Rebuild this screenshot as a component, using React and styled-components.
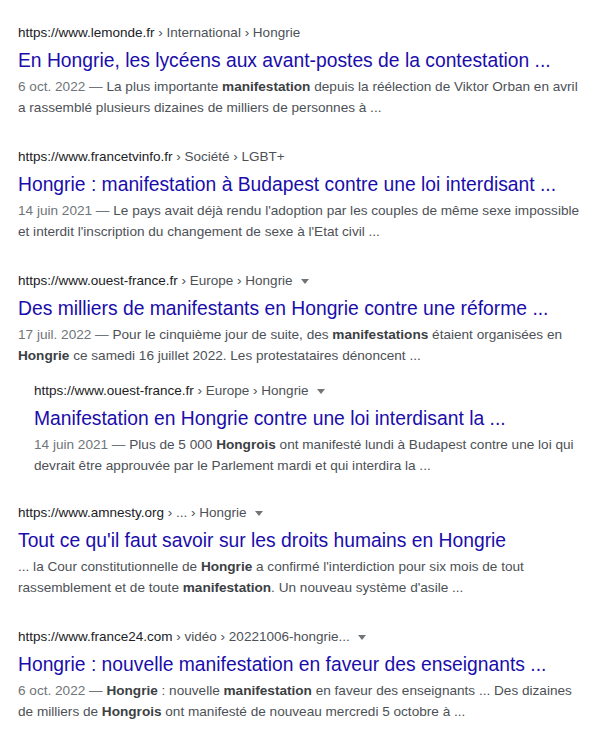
import React from "react";
import styled, { createGlobalStyle } from "styled-components";

const Global = createGlobalStyle`
  html, body { margin: 0; padding: 0; background: #fff; }
  body { font-family: "Liberation Sans", Arial, sans-serif; }
`;

const Page = styled.div`
  padding: 22px 21px 0 18px;
`;

const Result = styled.div`
  margin-left: ${(p) => (p.$nested ? "16px" : "0")};
  margin-top: ${(p) => (p.$nested ? "14px" : "0")};
  margin-bottom: ${(p) => (p.$nested ? "0" : p.$tight ? "26px" : "28px")};
`;

const UrlLine = styled.div`
  display: flex;
  align-items: center;
  font-size: 13.5px;
  line-height: 22px;
  color: #202124;
  white-space: nowrap;
`;

const Crumbs = styled.span`
  color: #4d5156;
`;

const Caret = styled.span`
  display: inline-block;
  width: 0;
  height: 0;
  margin-left: 8px;
  border-left: 4px solid transparent;
  border-right: 4px solid transparent;
  border-top: 5px solid #70757a;
`;

const Title = styled.a`
  display: block;
  font-size: 19.3px;
  line-height: 30px;
  padding-top: 2px;
  margin-bottom: -2px;
  color: #1a0dab;
  text-decoration: none;
  white-space: nowrap;
`;

const Snippet = styled.div`
  margin-top: 2px;
  font-size: 13.6px;
  line-height: 21px;
  color: #4d5156;
`;

const DateText = styled.span`
  color: #70757a;
`;

const B = styled.b`
  font-weight: 700;
  color: #3c4043;
`;

function Item({ url, crumbs, caret, title, date, children, nested, tight, extra }) {
  return (
    <Result $nested={nested} $tight={tight}>
      <UrlLine>
        {url}
        <Crumbs>&nbsp;{crumbs}</Crumbs>
        {caret && <Caret />}
      </UrlLine>
      <Title href="#">{title}</Title>
      <Snippet>
        {date && <DateText>{date} — </DateText>}
        {children}
      </Snippet>
      {extra}
    </Result>
  );
}

export default function App() {
  return (
    <>
      <Global />
      <Page>
        <Item
          url="https://www.lemonde.fr"
          crumbs="› International › Hongrie"
          title="En Hongrie, les lycéens aux avant-postes de la contestation ..."
          date="6 oct. 2022"
        >
          La plus importante <B>manifestation</B> depuis la réélection de Viktor Orban en avril a rassemblé plusieurs dizaines de milliers de personnes à ...
        </Item>
        <Item
          url="https://www.francetvinfo.fr"
          crumbs="› Société › LGBT+"
          title="Hongrie : manifestation à Budapest contre une loi interdisant ..."
          date="14 juin 2021"
        >
          Le pays avait déjà rendu l'adoption par les couples de même sexe impossible et interdit l'inscription du changement de sexe à l'Etat civil ...
        </Item>
        <Item
          url="https://www.ouest-france.fr"
          crumbs="› Europe › Hongrie"
          caret
          tight
          title="Des milliers de manifestants en Hongrie contre une réforme ..."
          date="17 juil. 2022"
          extra={
            <Item
              nested
              url="https://www.ouest-france.fr"
              crumbs="› Europe › Hongrie"
              caret
              title="Manifestation en Hongrie contre une loi interdisant la ..."
              date="14 juin 2021"
            >
              Plus de 5 000 <B>Hongrois</B> ont manifesté lundi à Budapest contre une loi qui devrait être approuvée par le Parlement mardi et qui interdira la ...
            </Item>
          }
        >
          Pour le cinquième jour de suite, des <B>manifestations</B> étaient organisées en <B>Hongrie</B> ce samedi 16 juillet 2022. Les protestataires dénoncent ...
        </Item>
        <Item
          url="https://www.amnesty.org"
          crumbs="› ... › Hongrie"
          caret
          title="Tout ce qu'il faut savoir sur les droits humains en Hongrie"
        >
          ... la Cour constitutionnelle de <B>Hongrie</B> a confirmé l'interdiction pour six mois de tout rassemblement et de toute <B>manifestation</B>. Un nouveau système d'asile ...
        </Item>
        <Item
          url="https://www.france24.com"
          crumbs="› vidéo › 20221006-hongrie..."
          caret
          title="Hongrie : nouvelle manifestation en faveur des enseignants ..."
          date="6 oct. 2022"
        >
          <B>Hongrie</B> : nouvelle <B>manifestation</B> en faveur des enseignants ... Des dizaines de milliers de <B>Hongrois</B> ont manifesté de nouveau mercredi 5 octobre à ...
        </Item>
      </Page>
    </>
  );
}
